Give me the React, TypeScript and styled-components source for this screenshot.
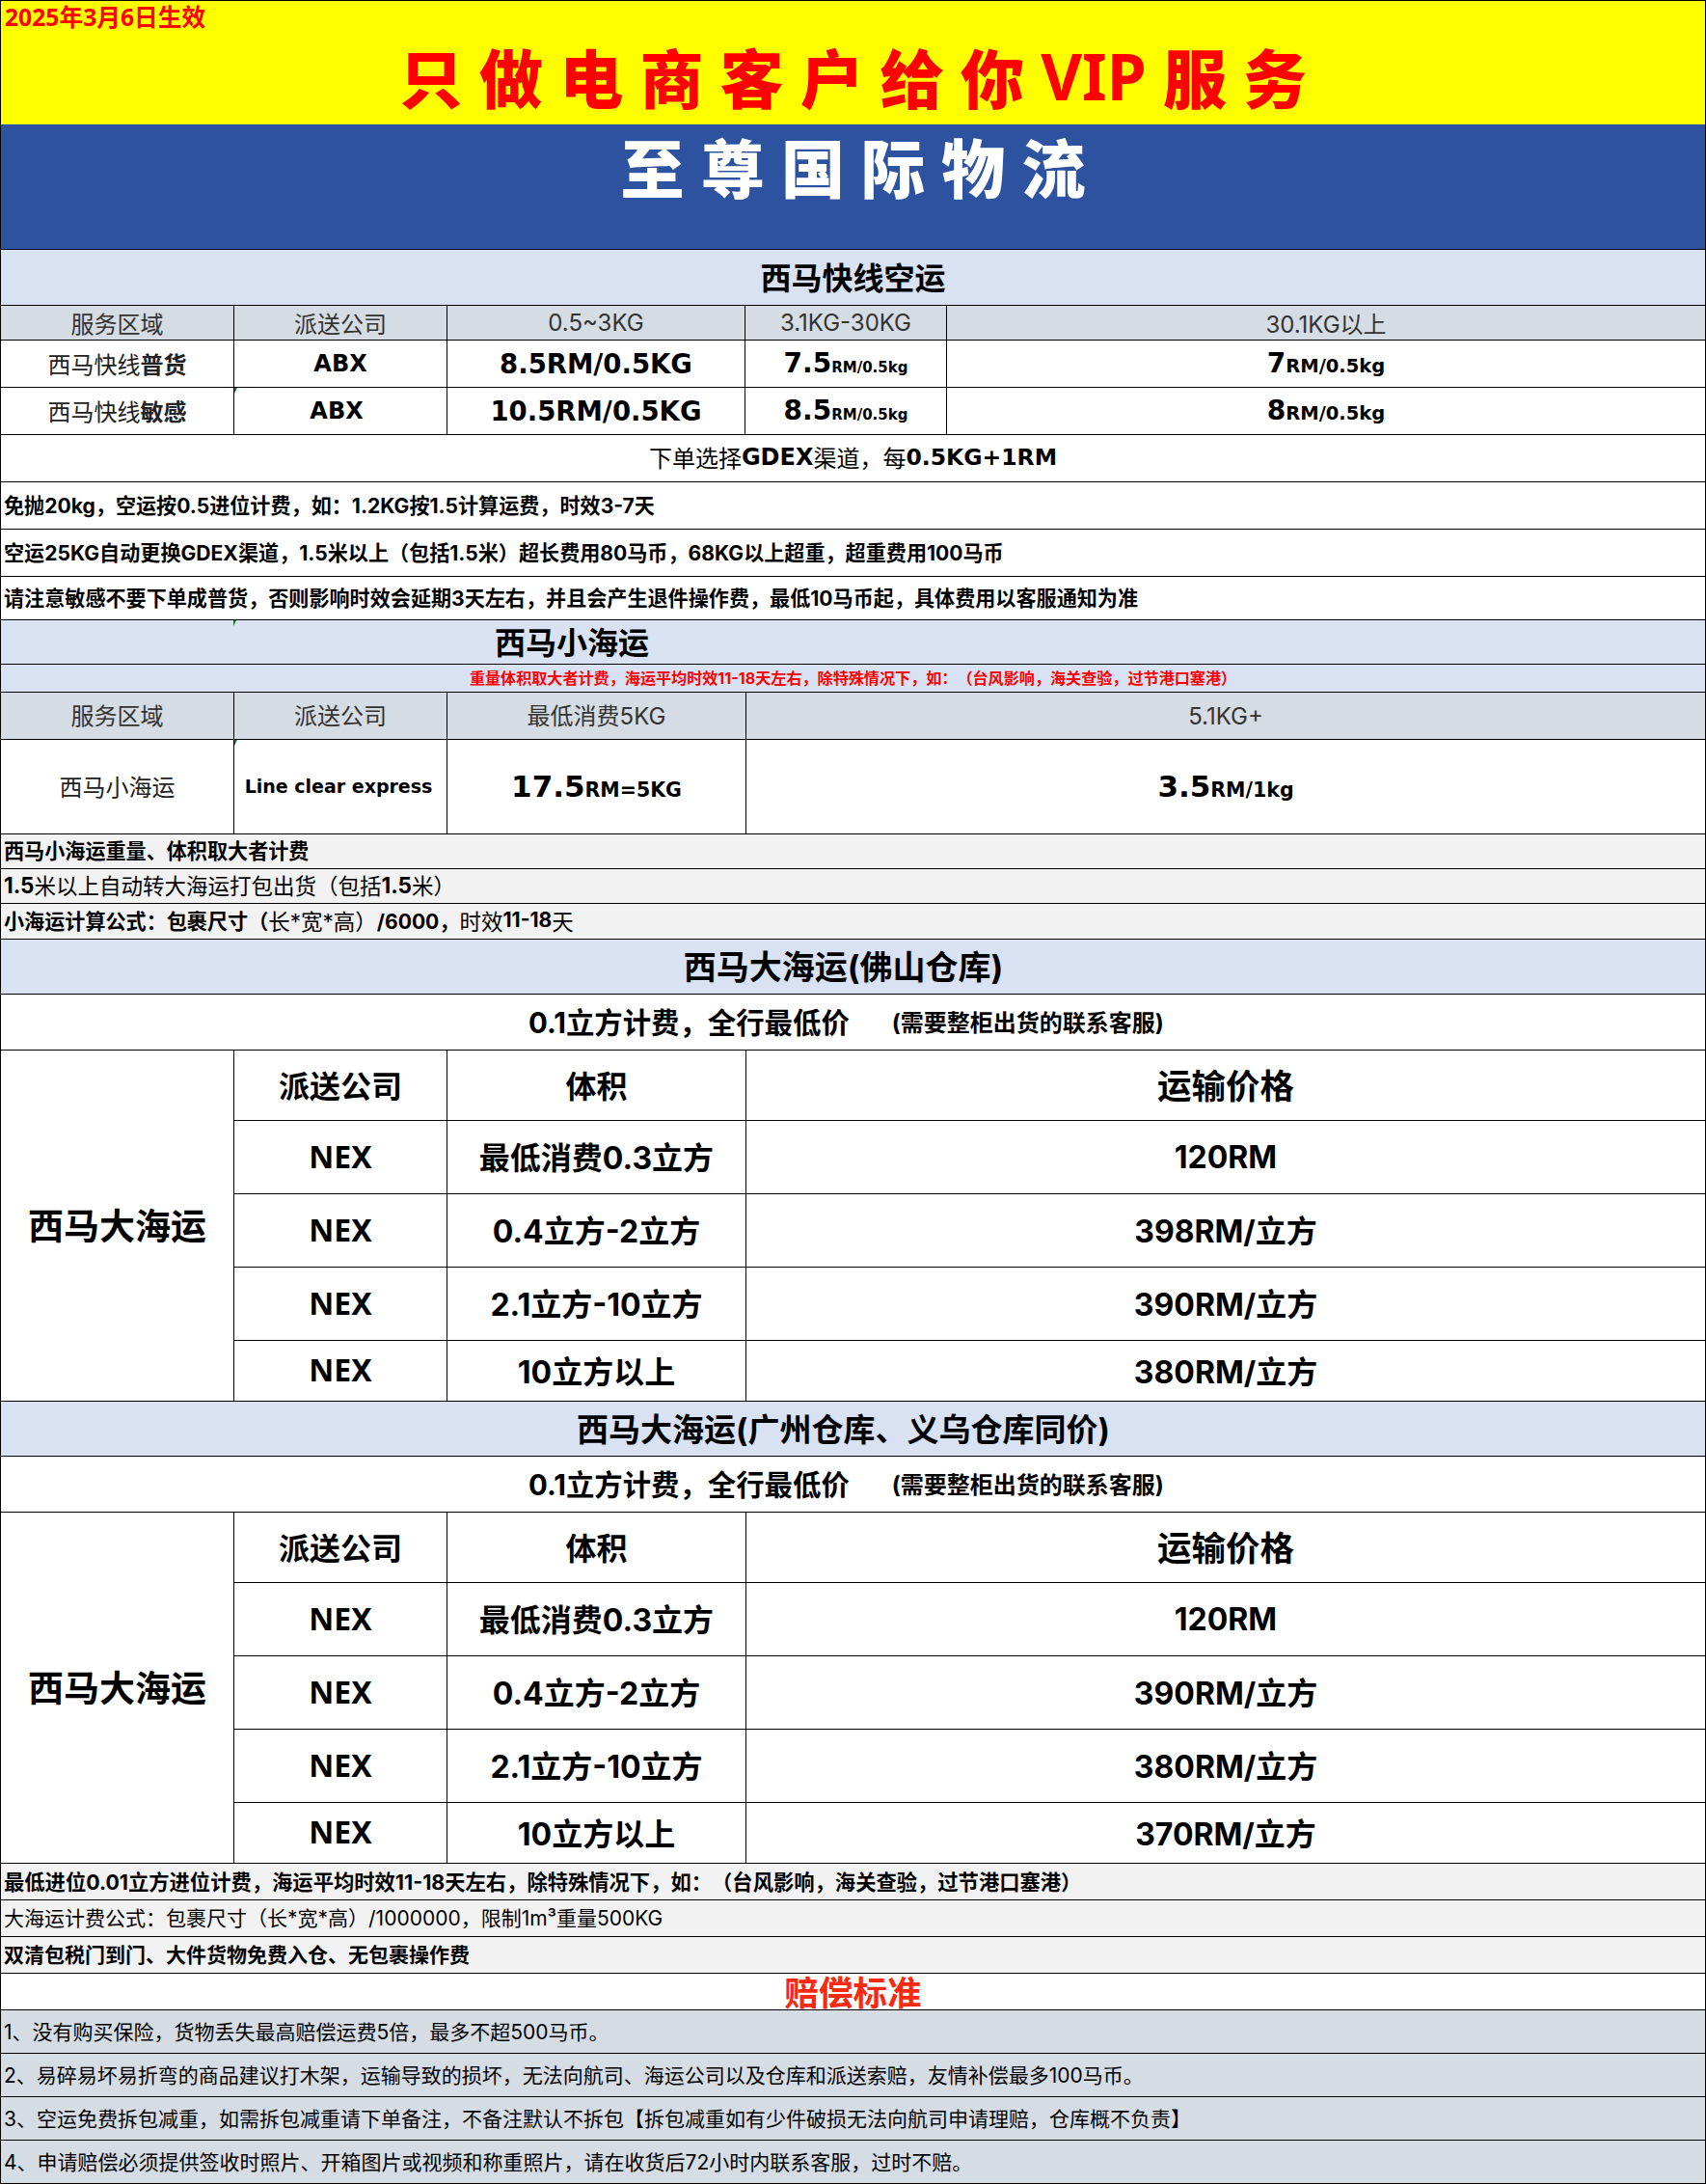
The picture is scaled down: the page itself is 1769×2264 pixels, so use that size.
import React from "react";
import styled, { createGlobalStyle } from "styled-components";

const CJK = `"Noto Sans", "Noto Sans CJK SC", sans-serif`;
const MIXED = `Inter, "Noto Sans CJK SC", sans-serif`;
const WIDE = `"DejaVu Sans", "Noto Sans CJK SC", sans-serif`;

const GlobalStyle = createGlobalStyle`
  html, body {
    margin: 0;
    background: #fff;
  }
  * {
    box-sizing: border-box;
  }
`;

const Sheet = styled.div`
  width: 1769px;
  height: 2264px;
  border-top: 1px solid #000;
  border-left: 1px solid #000;
  border-right: 1px solid #000;
  font-family: ${MIXED};
  color: #000;
  background: #fff;
  text-spacing-trim: space-all;
`;

const Banner = styled.div<{ $h: number }>`
  height: ${(p) => p.$h}px;
  display: flex;
  justify-content: center;
  font-family: ${CJK};
`;

const YellowBanner = styled(Banner)`
  position: relative;
  background: #ffff00;
  align-items: center;
  padding-top: 25px;
  color: #ff0000;
  font-size: 66px;
  font-weight: 900;
  white-space: pre;
`;

const BannerLatin = styled.span`
  font-weight: 700;
`;

const BlueBanner = styled(Banner)`
  background: #2d53a0;
  border-bottom: 1px solid #000;
  align-items: flex-start;
  color: #fff;
  font-size: 66px;
  line-height: 90px;
  font-weight: 900;
`;

const EffectiveDate = styled.span`
  position: absolute;
  left: 4px;
  top: 1px;
  font-size: 24.7px;
  line-height: 32px;
  font-weight: 700;
  color: #ff0000;
`;

const Band = styled.div<{ $h: number; $bg?: string }>`
  height: ${(p) => p.$h}px;
  display: flex;
  align-items: center;
  justify-content: center;
  padding-bottom: 3px;
  background: ${(p) => p.$bg || "#fff"};
  border-bottom: 1px solid #000;
  white-space: nowrap;
  position: relative;
`;

const SectionTitle = styled(Band)<{ $shift?: number }>`
  font-size: 32px;
  font-weight: 700;
  background: #d9e2f3;
  padding-right: ${(p) => p.$shift || 0}px;
`;

const SeaTitle = styled(SectionTitle)<{ $size: number }>`
  font-size: ${(p) => p.$size}px;
`;

const NoteBand = styled(Band)<{ $size?: number }>`
  justify-content: flex-start;
  padding-left: 3px;
  font-size: ${(p) => p.$size || 21.1}px;
  font-weight: 700;
`;

const GrayNote = styled(NoteBand)`
  background: #f2f2f2;
`;

const GrayPlainNote = styled(GrayNote)`
  font-weight: 400;
`;

const ClaimNote = styled(NoteBand)`
  font-weight: 400;
  background: #d6dce4;
`;

const Thin = styled.span`
  font-weight: 400;
  font-size: 22.5px;
`;

const CenterNote = styled(Band)`
  font-size: 24px;
  font-weight: 400;
`;

const WideBold = styled.b<{ $size: number }>`
  font-family: ${WIDE};
  font-weight: 700;
  font-size: ${(p) => p.$size}px;
`;

const Strong = styled.b`
  font-weight: 700;
`;

const RedNote = styled(Band)`
  font-size: 16.1px;
  font-weight: 700;
  color: #ff0000;
  background: #d9e2f3;
`;

const RedTitle = styled(Band)`
  font-size: 35.5px;
  font-weight: 700;
  color: #f52a11;
`;

const SubTitle = styled(Band)`
  font-size: 29.4px;
  font-weight: 700;
  gap: 44px;
  padding-right: 14px;
`;

const SubTitleHint = styled.span`
  font-size: 24px;
`;

const Row = styled.div<{ $h: number; $cols: string; $bg?: string }>`
  height: ${(p) => p.$h}px;
  display: grid;
  grid-template-columns: ${(p) => p.$cols};
  background: ${(p) => p.$bg || "#fff"};
  border-bottom: 1px solid #000;
`;

const Tick = styled.i<{ $left?: number }>`
  position: absolute;
  left: ${(p) => p.$left || 0}px;
  top: 0;
  border-top: 6px solid #0a7a1f;
  border-right: 3px solid transparent;
`;

const Cell = styled.div`
  display: flex;
  align-items: center;
  justify-content: center;
  padding-bottom: 2px;
  white-space: nowrap;
  position: relative;
  border-right: 1px solid #000;
  &:last-child {
    border-right: 0;
  }
`;

const HeadCell = styled(Cell)<{ $flat?: boolean }>`
  font-size: 24px;
  color: #333;
  padding-bottom: ${(p) => (p.$flat ? 0 : 4)}px;
`;

const AreaCell = styled(Cell)`
  font-size: 24px;
  color: #222;
`;

const CarrierCell = styled(Cell)<{ $size?: number; $nudge?: number }>`
  font-family: ${WIDE};
  font-weight: 700;
  font-size: ${(p) => p.$size || 24}px;
  padding-right: ${(p) => p.$nudge || 0}px;
  padding-bottom: 1px;
`;

const PriceCell = styled(Cell)<{ $size?: number }>`
  font-family: ${WIDE};
  font-weight: 700;
  font-size: ${(p) => p.$size || 27.5}px;
  padding-bottom: 1px;
`;

const Unit = styled.span<{ $size: number }>`
  font-size: ${(p) => p.$size}px;
`;

const SeaGrid = styled.div`
  display: grid;
  grid-template-columns: 242px 221px 310px 1fr;
  grid-template-rows: 73px 76px 76px 76px 62px;
  border-bottom: 1px solid #000;
`;

const SeaLabel = styled.div`
  grid-row: 1 / span 5;
  display: flex;
  align-items: center;
  justify-content: center;
  padding-bottom: 3px;
  font-size: 37px;
  font-weight: 700;
  border-right: 1px solid #000;
`;

const SeaCell = styled.div<{ $last?: boolean; $size?: number; $flat?: boolean }>`
  display: flex;
  align-items: center;
  justify-content: center;
  padding-bottom: ${(p) => (p.$flat ? 1 : 3)}px;
  font-size: ${(p) => p.$size || 32}px;
  font-weight: 700;
  white-space: nowrap;
  border-bottom: ${(p) => (p.$last ? "0" : "1px solid #000")};
  border-right: 1px solid #000;
  &:nth-child(3n + 1) {
    border-right: 0;
  }
`;

const CarrierSeaCell = styled(SeaCell)`
  font-family: ${CJK};
`;

const AIR_COLS = "242px 221px 309px 209px 1fr";
const SMALL_COLS = "242px 221px 310px 1fr";

function AirRow({
  name,
  tag,
  price,
  mid,
  high,
  second,
}: {
  name: string;
  tag: string;
  price: string;
  mid: string;
  high: string;
  second?: boolean;
}) {
  return (
    <Row $h={49} $cols={AIR_COLS}>
      <AreaCell>
        {name}
        <Strong>{tag}</Strong>
      </AreaCell>
      <CarrierCell $nudge={second ? 8 : 0}>
        {second && <Tick />}
        ABX
      </CarrierCell>
      <PriceCell>{price}</PriceCell>
      <PriceCell $size={28}>
        <span>
          {mid}
          <Unit $size={15}>RM/0.5kg</Unit>
        </span>
      </PriceCell>
      <PriceCell $size={28}>
        <span>
          {high}
          <Unit $size={19.5}>RM/0.5kg</Unit>
        </span>
      </PriceCell>
    </Row>
  );
}

function SeaTable({ prices }: { prices: string[] }) {
  const volumes = ["最低消费0.3立方", "0.4立方-2立方", "2.1立方-10立方", "10立方以上"];
  return (
    <SeaGrid>
      <SeaLabel>西马大海运</SeaLabel>
      <SeaCell>派送公司</SeaCell>
      <SeaCell>体积</SeaCell>
      <SeaCell $size={35.5}>运输价格</SeaCell>
      {volumes.map((v, i) => (
        <React.Fragment key={v}>
          <CarrierSeaCell $last={i === 3}>NEX</CarrierSeaCell>
          <SeaCell $last={i === 3}>{v}</SeaCell>
          <SeaCell $last={i === 3} $flat={i === 0}>
            {prices[i]}
          </SeaCell>
        </React.Fragment>
      ))}
    </SeaGrid>
  );
}

export default function App() {
  return (
    <>
      <GlobalStyle />
      <Sheet>
        <YellowBanner $h={128}>
          <EffectiveDate>2025年3月6日生效</EffectiveDate>
          只 做 电 商 客 户 给 你 <BannerLatin>VIP</BannerLatin> 服 务
        </YellowBanner>
        <BlueBanner $h={130}>至 尊 国 际 物 流</BlueBanner>

        <SectionTitle $h={58}>西马快线空运</SectionTitle>
        <Row $h={36} $cols={AIR_COLS} $bg="#d6dce4">
          <HeadCell>服务区域</HeadCell>
          <HeadCell>派送公司</HeadCell>
          <HeadCell>0.5~3KG</HeadCell>
          <HeadCell>3.1KG-30KG</HeadCell>
          <HeadCell>30.1KG以上</HeadCell>
        </Row>
        <AirRow name="西马快线" tag="普货" price="8.5RM/0.5KG" mid="7.5" high="7" />
        <AirRow name="西马快线" tag="敏感" price="10.5RM/0.5KG" mid="8.5" high="8" second />
        <CenterNote $h={49}>
          下单选择<WideBold $size={24}>GDEX</WideBold>渠道，每<WideBold $size={23.5}>0.5KG+1RM</WideBold>
        </CenterNote>
        <NoteBand $h={49}>免抛20kg，空运按0.5进位计费，如：1.2KG按1.5计算运费，时效3-7天</NoteBand>
        <NoteBand $h={49}>
          空运25KG自动更换GDEX渠道，1.5米以上（包括1.5米）超长费用80马币，68KG以上超重，超重费用100马币
        </NoteBand>
        <NoteBand $h={45}>
          请注意敏感不要下单成普货，否则影响时效会延期3天左右，并且会产生退件操作费，最低10马币起，具体费用以客服通知为准
        </NoteBand>

        <SectionTitle $h={46} $shift={583}>
          <Tick $left={241} />
          西马小海运
        </SectionTitle>
        <RedNote $h={29}>重量体积取大者计费，海运平均时效11-18天左右，除特殊情况下，如：（台风影响，海关查验，过节港口塞港）</RedNote>
        <Row $h={49} $cols={SMALL_COLS} $bg="#d6dce4">
          <HeadCell>服务区域</HeadCell>
          <HeadCell>派送公司</HeadCell>
          <HeadCell>最低消费5KG</HeadCell>
          <HeadCell $flat>5.1KG+</HeadCell>
        </Row>
        <Row $h={98} $cols={SMALL_COLS}>
          <AreaCell>西马小海运</AreaCell>
          <CarrierCell $size={19} $nudge={4}>
            <Tick />
            Line clear express
          </CarrierCell>
          <PriceCell $size={31}>
            <span>
              17.5<Unit $size={20.5}>RM=5KG</Unit>
            </span>
          </PriceCell>
          <PriceCell $size={31}>
            <span>
              3.5<Unit $size={20.5}>RM/1kg</Unit>
            </span>
          </PriceCell>
        </Row>
        <GrayNote $h={36}>西马小海运重量、体积取大者计费</GrayNote>
        <GrayPlainNote $h={36} $size={22.5}>
          <Strong>1.5</Strong>米以上自动转大海运打包出货（包括<Strong>1.5</Strong>米）
        </GrayPlainNote>
        <GrayNote $h={37}>
          小海运计算公式：包裹尺寸（<Thin>长*宽*高）</Thin>/6000，<Thin>时效</Thin>11-18<Thin>天</Thin>
        </GrayNote>

        <SeaTitle $h={57} $shift={20} $size={34}>西马大海运(佛山仓库)</SeaTitle>
        <SubTitle $h={58}>
          0.1立方计费，全行最低价
          <SubTitleHint>(需要整柜出货的联系客服)</SubTitleHint>
        </SubTitle>
        <SeaTable prices={["120RM", "398RM/立方", "390RM/立方", "380RM/立方"]} />

        <SeaTitle $h={57} $shift={20} $size={33}>西马大海运(广州仓库、义乌仓库同价)</SeaTitle>
        <SubTitle $h={58}>
          0.1立方计费，全行最低价
          <SubTitleHint>(需要整柜出货的联系客服)</SubTitleHint>
        </SubTitle>
        <SeaTable prices={["120RM", "390RM/立方", "380RM/立方", "370RM/立方"]} />

        <GrayNote $h={38} $size={21.3}>最低进位0.01立方进位计费，海运平均时效11-18天左右，除特殊情况下，如：（台风影响，海关查验，过节港口塞港）</GrayNote>
        <GrayPlainNote $h={38} $size={21}>大海运计费公式：包裹尺寸（长*宽*高）/1000000，限制1m³重量500KG</GrayPlainNote>
        <GrayNote $h={38} $size={21}>双清包税门到门、大件货物免费入仓、无包裹操作费</GrayNote>
        <RedTitle $h={38}>赔偿标准</RedTitle>
        <ClaimNote $h={45} $size={21}>1、没有购买保险，货物丢失最高赔偿运费5倍，最多不超500马币。</ClaimNote>
        <ClaimNote $h={45} $size={21}>2、易碎易坏易折弯的商品建议打木架，运输导致的损坏，无法向航司、海运公司以及仓库和派送索赔，友情补偿最多100马币。</ClaimNote>
        <ClaimNote $h={45} $size={21}>3、空运免费拆包减重，如需拆包减重请下单备注，不备注默认不拆包【拆包减重如有少件破损无法向航司申请理赔，仓库概不负责】</ClaimNote>
        <ClaimNote $h={45} $size={21}>4、申请赔偿必须提供签收时照片、开箱图片或视频和称重照片，请在收货后72小时内联系客服，过时不赔。</ClaimNote>
      </Sheet>
    </>
  );
}
